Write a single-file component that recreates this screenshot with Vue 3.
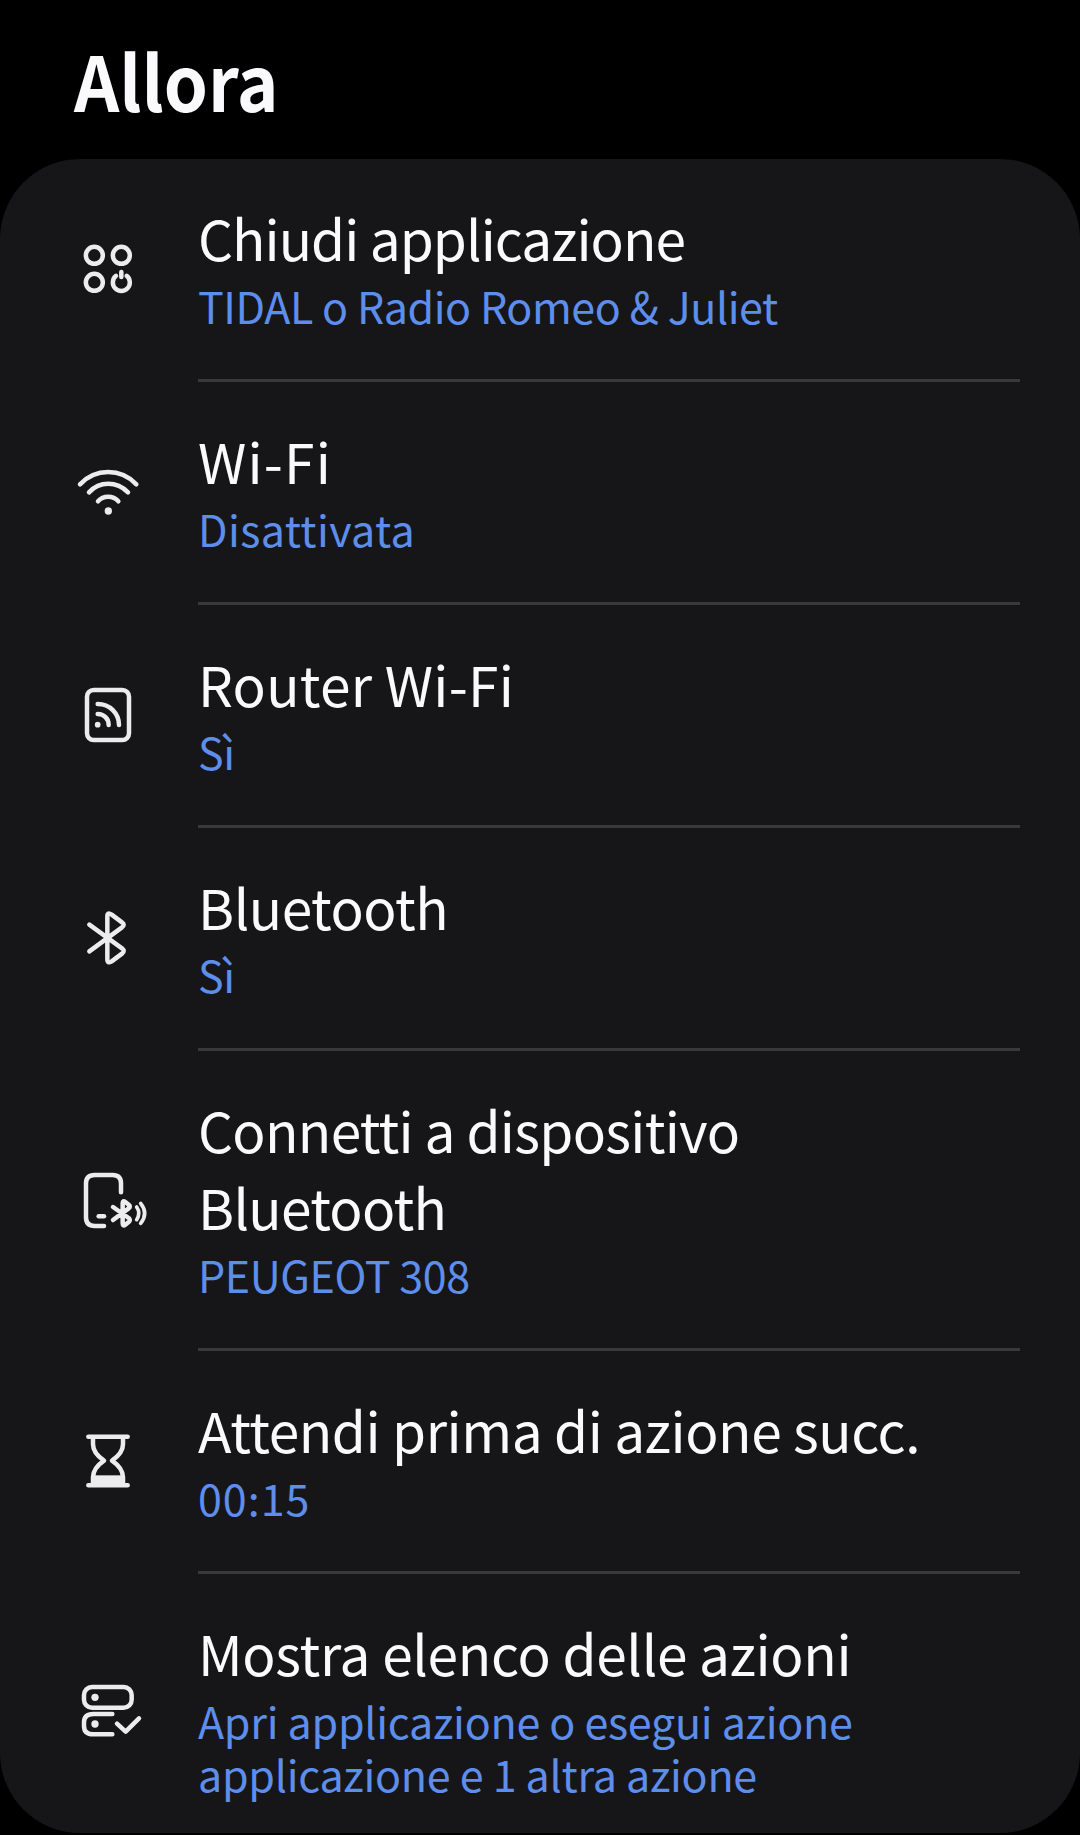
<template>
  <div class="routine">
    <h1 class="heading">Allora</h1>
    <ul class="card">
      <li v-for="(action, index) in actions" :key="index" class="action">
        <svg class="icon" :viewBox="action.viewBox" aria-hidden="true">
          <g v-if="action.icon === 'apps'" class="line">
            <circle cx="103" cy="91" r="25.5" />
            <circle cx="184" cy="91" r="25.5" />
            <circle cx="103" cy="172" r="25.5" />
            <path d="M168 152.500A25.500 25.500 0 1 0 200 152.500M184 141V156" />
          </g>
          <g v-else-if="action.icon === 'wifi'" class="line">
            <path d="M60 103C107 54 182 54 229 103M87 127C119 93 170 93 204 127M114 154C130 136 159 136 175 154" />
            <circle cx="145" cy="183" r="11" class="fill" />
          </g>
          <g v-else-if="action.icon === 'hotspot'" class="line">
            <rect x="81" y="60" width="126" height="150" rx="20" />
            <path d="M113 102C149 102 177 130 177 165M113 132C132 132 146 146 146 165" />
            <circle cx="113" cy="164" r="8.500" class="fill" />
          </g>
          <g v-else-if="action.icon === 'bluetooth'" class="line">
            <path d="M88 89L186 160Q196 168 186 176L155 199Q142 207 142 193V64Q142 50 155 59L186 82Q196 89 186 97L88 169" />
          </g>
          <g v-else-if="action.icon === 'device'" class="line">
            <path d="M183 111V84Q183 59 158 59H104Q78 59 78 84V186Q78 212 104 212H132" />
            <path d="M116 183H132" />
            <path d="M159 155L206 188Q213 194 206 200L196 208Q188 214 188 204V144Q188 134 196 140L206 148Q213 153 206 159L159 194" />
            <path d="M230 155Q243 174 230 193M242 144Q266 174 242 204" class="thin" />
          </g>
          <g v-else-if="action.icon === 'hourglass'" class="line">
            <path d="M85 65H203M85 211H203" />
            <path d="M99 67V88C99 112 116 126 132 137C116 148 99 162 99 187V209" />
            <path d="M189 67V88C189 112 172 126 156 137C172 148 189 162 189 187V209" />
            <path d="M99 181H189V211H99Z" class="fill" />
          </g>
          <g v-else class="line">
            <rect x="72" y="64" width="143" height="62" rx="24" />
            <path d="M157 145H100Q72 145 72 170V181Q72 206 100 206H157" />
            <path d="M171 174L197 198L237 158" />
            <circle cx="105" cy="95" r="11" class="fill" />
            <circle cx="105" cy="175" r="11" class="fill" />
          </g>
        </svg>
        <div class="text">
          <p class="title" :style="{ letterSpacing: action.tracking[0] + 'px' }">{{ action.title }}</p>
          <p class="detail" :style="{ letterSpacing: action.tracking[1] + 'px' }">{{ action.detail }}</p>
        </div>
      </li>
    </ul>
  </div>
</template>

<script setup>
// tracking: letter spacing of the title and of the detail, in px
const actions = [
  { icon: 'apps', viewBox: '0 -3 300 270', title: 'Chiudi applicazione', detail: 'TIDAL o Radio Romeo & Juliet', tracking: [-0.97, -0.42] },
  { icon: 'wifi', viewBox: '0 -9 300 270', title: 'Wi-Fi', detail: 'Disattivata', tracking: [1.2, 0.4] },
  { icon: 'hotspot', viewBox: '0 0 300 270', title: 'Router Wi-Fi', detail: 'Sì', tracking: [0.25, -0.5] },
  { icon: 'bluetooth', viewBox: '0 -6 300 270', title: 'Bluetooth', detail: 'Sì', tracking: [-0.5, -0.5] },
  { icon: 'device', viewBox: '0 -1 300 270', title: 'Connetti a dispositivo Bluetooth', detail: 'PEUGEOT 308', tracking: [-0.72, -0.42] },
  { icon: 'hourglass', viewBox: '0 3 300 270', title: 'Attendi prima di azione succ.', detail: '00:15', tracking: [-0.45, 1] },
  { icon: 'list', viewBox: '0 1 300 270', title: 'Mostra elenco delle azioni', detail: 'Apri applicazione o esegui azione applicazione e 1 altra azione', tracking: [-0.32, -0.27] },
];
</script>

<style>
body {
  background: #000;
}
</style>

<style scoped>
.routine {
  height: 1835px;
  overflow: hidden;
  background: #000;
  color: #fafafc;
  font-family: "Noto Sans CJK JP", "Noto Sans", sans-serif;
}

.heading {
  height: 159px;
  margin: 0;
  padding: 27px 0 0 74px;
  box-sizing: border-box;
  font-size: 76px;
  line-height: 104px;
  font-weight: 700;
  transform: scaleX(0.93);
  transform-origin: 74px 0;
}

.card {
  height: 1674px;
  margin: 0;
  padding: 0;
  overflow: hidden;
  list-style: none;
  background: #161618;
  border-radius: 80px;
}

.action {
  display: flex;
  align-items: center;
  padding: 0 60px;
}

.icon {
  flex: none;
  width: 100px;
  height: 90px;
  margin: 0 38px 3px 0;
}

.line {
  fill: none;
  stroke: #ececee;
  stroke-width: 13.5;
  stroke-linecap: round;
  stroke-linejoin: round;
}

.thin {
  stroke-width: 11;
}

.fill {
  fill: #ececee;
  stroke: none;
}

.text {
  flex: 1;
  padding: 40px 0 47px;
  border-bottom: 3px solid #39393b;
}

.action:last-child .text {
  border-bottom-color: transparent;
}

.title,
.detail {
  margin: 0;
}

.title {
  padding-right: 60px;
  font-size: 55px;
  line-height: 77px;
}

.detail {
  margin-top: 3px;
  color: #5e8eec;
  font-size: 43px;
  line-height: 53px;
}
</style>
